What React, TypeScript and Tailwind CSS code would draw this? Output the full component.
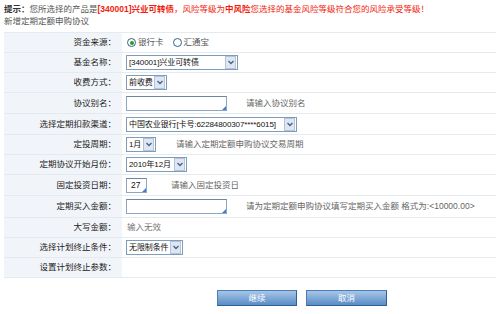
import React from 'react';

function Chevron() {
  return (
    <svg width="6" height="5" viewBox="0 0 6 5" className="block">
      <path d="M0.5 1 L3 3.5 L5.5 1" fill="none" stroke="#4d6185" strokeWidth="1.4" />
    </svg>
  );
}

function Select({ text, w }: { text: string; w: string }) {
  return (
    <div className={`${w} h-[15px] border border-[#7f9db9] bg-white flex items-center`}>
      <span className="flex-1 pl-[2px] whitespace-nowrap overflow-hidden leading-[13px] text-[8px] tracking-[-0.1px] text-[#111]">{text}</span>
      <span className="w-[11px] h-[13px] mr-[1px] shrink-0 border border-[#b5c3d8] bg-[#dde6f3] flex items-center justify-center">
        <Chevron />
      </span>
    </div>
  );
}

function Input({ w, value }: { w: string; value?: string }) {
  return (
    <div className={`${w} h-[15px] relative border border-[#8fa6c0] border-t-[#6f86a3] bg-white leading-[13px] pl-[4px] text-[#111]`}>
      {value}
      <span className="absolute right-0 bottom-0 w-0 h-0 border-l-[4px] border-l-transparent border-b-[4px] border-b-[#3b80d0]" />
    </div>
  );
}

function Radio({ checked, label }: { checked?: boolean; label: string }) {
  return (
    <label className="flex items-center gap-[2px] text-[#555]">
      <span className="w-[9px] h-[9px] rounded-full border border-[#2d5f91] bg-white flex items-center justify-center">
        {checked && <span className="w-[4px] h-[4px] rounded-full bg-[#21a121]" />}
      </span>
      {label}
    </label>
  );
}

function Row({ label, h, children }: { label: string; h: string; children?: React.ReactNode }) {
  return (
    <div className={`flex ${h} border-b border-[#e3eaf0]`}>
      <div className="w-[118px] bg-[#f1f5f9] text-right pr-[6px] flex items-center justify-end text-[#222]">{label}</div>
      <div className="flex-1 flex items-center pl-[4px]">{children}</div>
    </div>
  );
}

function Help({ ml, children }: { ml: string; children: React.ReactNode }) {
  return <span className={`${ml} text-[#666] whitespace-nowrap`}>{children}</span>;
}

export default function App() {
  return (
    <div className="w-[500px] h-[314px] bg-white text-[8.5px] text-[#333] font-['Liberation_Sans','Noto_Sans_CJK_SC',sans-serif]">
      <div className="pl-[4px] pt-[3px]">
        <div className="h-[12px] leading-[12px] whitespace-nowrap">
          <span className="font-bold text-[#333]">提示：</span>
          <span className="text-[#555]">您所选择的产品是</span>
          <span className="font-bold text-[#f21d0d]">[340001]兴业可转债</span>
          <span className="text-[#f21d0d]">，风险等级为</span>
          <span className="font-bold text-[#f21d0d]">中风险</span>
          <span className="text-[#f21d0d]">您选择的基金风险等级符合您的风险承受等级！</span>
        </div>
        <div className="h-[12px] leading-[12px] text-[#555]">新增定期定额申购协议</div>
      </div>

      <div className="mx-[4px] mt-[5px] border-t border-[#e3eaf0]">
        <Row label="资金来源：" h="h-[20px]">
          <div className="flex items-center gap-[9px] pl-[1px]">
            <Radio checked label="银行卡" />
            <Radio label="汇通宝" />
          </div>
        </Row>
        <Row label="基金名称：" h="h-[20px]">
          <Select text="[340001]兴业可转债" w="w-[112px]" />
        </Row>
        <Row label="收费方式：" h="h-[20px]">
          <Select text="前收费" w="w-[41px]" />
        </Row>
        <Row label="协议别名：" h="h-[21px]">
          <Input w="w-[101px]" />
          <Help ml="ml-[19px]">请输入协议别名</Help>
        </Row>
        <Row label="选择定期扣款渠道：" h="h-[21px]">
          <Select text="中国农业银行[卡号:62284800307****6015]" w="w-[171px]" />
        </Row>
        <Row label="定投周期：" h="h-[20px]">
          <Select text="1月" w="w-[30px]" />
          <Help ml="ml-[20px]">请输入定期定额申购协议交易周期</Help>
        </Row>
        <Row label="定期协议开始月份：" h="h-[20px]">
          <Select text="2010年12月" w="w-[61px]" />
        </Row>
        <Row label="固定投资日期：" h="h-[21px]">
          <Input w="w-[21px]" value="27" />
          <Help ml="ml-[24px]">请输入固定投资日</Help>
        </Row>
        <Row label="定期买入金额：" h="h-[22px]">
          <Input w="w-[101px]" />
          <Help ml="ml-[19px]">请为定期定额申购协议填写定期买入金额 格式为:&lt;10000.00&gt;</Help>
        </Row>
        <Row label="大写金额：" h="h-[20px]">
          <span className="pl-[1px] text-[#777]">输入无效</span>
        </Row>
        <Row label="选择计划终止条件：" h="h-[20px]">
          <Select text="无限制条件" w="w-[57px]" />
        </Row>
        <Row label="设置计划终止参数：" h="h-[20px]" />
      </div>

      <div className="flex gap-[9px] pl-[217px] mt-[12px]">
        <button className="w-[80px] h-[16px] border border-[#4a7db5] border-r-[#2e5f96] border-b-[#2e5f96] bg-gradient-to-b from-[#a7c6e7] to-[#5a8cc6] text-white text-[8.5px] leading-[14px]">
          继续
        </button>
        <button className="w-[81px] h-[16px] border border-[#4a7db5] border-r-[#2e5f96] border-b-[#2e5f96] bg-gradient-to-b from-[#a7c6e7] to-[#5a8cc6] text-white text-[8.5px] leading-[14px]">
          取消
        </button>
      </div>
    </div>
  );
}
